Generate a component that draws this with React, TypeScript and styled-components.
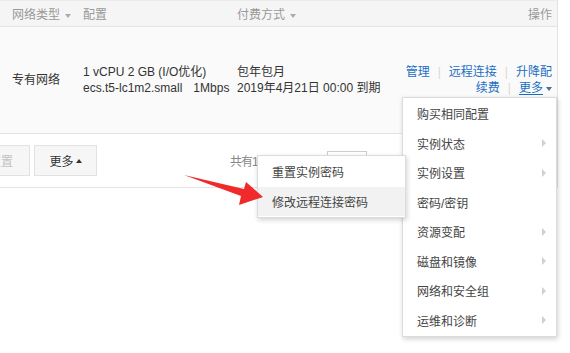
import React from 'react';
import styled, {createGlobalStyle} from 'styled-components';

const GlobalStyle = createGlobalStyle`
  html, body {
    margin: 0;
    padding: 0;
    background: #fff;
  }
  body {
    font-family: "Liberation Sans", "Noto Sans CJK SC", sans-serif;
    font-size: 12px;
    color: #333;
  }
`;

const Page = styled.div`
  position: relative;
  width: 570px;
  height: 353px;
  overflow: hidden;
  background: #fff;
`;

const Table = styled.div`
  width: 557px;
  border-right: 1px solid #e3e3e3;
`;

const HeaderRow = styled.div`
  display: flex;
  align-items: center;
  height: 25px;
  padding-left: 12px;
  padding-right: 5px;
  background: #f5f5f5;
  border-top: 1px solid #ececec;
  border-bottom: 1px solid #e4e4e4;
  color: #999;
`;

const Cell = styled.div<{w?: number; right?: boolean}>`
  ${(p) => (p.w ? `width: ${p.w}px;` : 'flex: 1;')}
  flex-shrink: 0;
  text-align: ${(p) => (p.right ? 'right' : 'left')};
  white-space: nowrap;
`;

const Caret = styled.span`
  display: inline-block;
  margin-left: 5px;
  vertical-align: middle;
  border-left: 3px solid transparent;
  border-right: 3px solid transparent;
  border-top: 4px solid #aaa;
`;

const DataRow = styled.div`
  display: flex;
  align-items: center;
  height: 106px;
  padding-left: 12px;
  padding-right: 5px;
  background: #fafafa;
  border-bottom: 1px solid #e4e4e4;
  line-height: 16px;
`;

const Gap = styled.span<{w: number}>`
  display: inline-block;
  width: ${(p) => p.w}px;
`;

const Link = styled.a<{underline?: boolean}>`
  color: #1a6fc4;
  text-decoration: ${(p) => (p.underline ? 'underline' : 'none')};
  text-underline-offset: 2px;
  cursor: pointer;
`;

const Sep = styled.span`
  color: #d8d8d8;
  margin: 0 8px;
`;

const BlueCaret = styled(Caret)`
  margin-left: 3px;
  border-top-color: #4a6f95;
`;

const Footer = styled.div`
  display: flex;
  align-items: center;
  height: 53px;
  border-bottom: 1px solid #e4e4e4;
`;

const Button = styled.div<{disabled?: boolean; offset?: number; w: number}>`
  display: flex;
  align-items: center;
  justify-content: center;
  box-sizing: border-box;
  width: ${(p) => p.w}px;
  height: 31px;
  margin-left: ${(p) => p.offset ?? 0}px;
  margin-right: 4px;
  background: #f6f6f6;
  border: 1px solid #e2e2e2;
  color: ${(p) => (p.disabled ? '#c2c2c2' : '#333')};
`;

const UpCaret = styled.span`
  display: inline-block;
  margin-left: 2px;
  border-left: 3px solid transparent;
  border-right: 3px solid transparent;
  border-bottom: 4px solid #333;
`;

const Pager = styled.div`
  display: flex;
  align-items: center;
  margin-left: 129px;
  color: #888;
  letter-spacing: -1px;
`;

const SizeBox = styled.div`
  box-sizing: border-box;
  width: 40px;
  height: 19px;
  margin: 0 4px 0 3px;
  padding-left: 6px;
  line-height: 17px;
  border: 1px solid #ccc;
  background: #fff;
  color: #555;
  letter-spacing: 0;
`;

const Menu = styled.div<{x: number; y: number; w: number}>`
  position: absolute;
  left: ${(p) => p.x}px;
  top: ${(p) => p.y}px;
  width: ${(p) => p.w}px;
  background: #fff;
  border: 1px solid #dcdcdc;
  box-shadow: 1px 2px 5px rgba(0, 0, 0, 0.18);
  padding: 1px 0;
  color: #444;
`;

const MenuItem = styled.div<{active?: boolean}>`
  display: flex;
  align-items: center;
  justify-content: space-between;
  height: 29.5px;
  padding: 0 10px 0 14px;
  background: ${(p) => (p.active ? '#f2f2f2' : 'transparent')};
  white-space: nowrap;
`;

const SubArrow = styled.span`
  display: inline-block;
  border-top: 4px solid transparent;
  border-bottom: 4px solid transparent;
  border-left: 4px solid #d0d0d0;
`;

const ArrowLayer = styled.svg`
  position: absolute;
  left: 0;
  top: 0;
  pointer-events: none;
`;

const moreItems = [
  {label: '购买相同配置', sub: false},
  {label: '实例状态', sub: true},
  {label: '实例设置', sub: true},
  {label: '密码/密钥', sub: false},
  {label: '资源变配', sub: true},
  {label: '磁盘和镜像', sub: true},
  {label: '网络和安全组', sub: true},
  {label: '运维和诊断', sub: true},
];

const App: React.FC = () => {
  return (
    <>
      <GlobalStyle />
      <Page>
        <Table>
          <HeaderRow>
            <Cell w={71}>
              网络类型
              <Caret />
            </Cell>
            <Cell w={154}>配置</Cell>
            <Cell>
              付费方式
              <Caret />
            </Cell>
            <Cell right>操作</Cell>
          </HeaderRow>

          <DataRow>
            <Cell w={71}>专有网络</Cell>
            <Cell w={154}>
              <div>1 vCPU 2 GB (I/O优化)</div>
              <div>
                ecs.t5-lc1m2.small
                <Gap w={11} />
                1Mbps
              </div>
            </Cell>
            <Cell>
              <div>包年包月</div>
              <div>2019年4月21日 00:00 到期</div>
            </Cell>
            <Cell right>
              <div>
                <Link>管理</Link>
                <Sep>|</Sep>
                <Link>远程连接</Link>
                <Sep>|</Sep>
                <Link>升降配</Link>
              </div>
              <div>
                <Link>续费</Link>
                <Sep>|</Sep>
                <Link underline>更多</Link>
                <BlueCaret />
              </div>
            </Cell>
          </DataRow>

          <Footer>
            <Button disabled w={58} offset={-28}>
              重置
            </Button>
            <Button w={63}>
              更多
              <UpCaret />
            </Button>
            <Pager>
              共有1条，每页显示
              <SizeBox>20</SizeBox>条
            </Pager>
          </Footer>
        </Table>

        <Menu x={402} y={97} w={153}>
          {moreItems.map((item) => (
            <MenuItem key={item.label}>
              {item.label}
              {item.sub && <SubArrow />}
            </MenuItem>
          ))}
        </Menu>

        <Menu x={257} y={155} w={147}>
          <MenuItem>重置实例密码</MenuItem>
          <MenuItem active>修改远程连接密码</MenuItem>
        </Menu>

        <ArrowLayer width="570" height="353" viewBox="0 0 570 353">
          <path
            d="M184 175 L244 189 L246 182 L263 197 L239 205 L241 196 Z"
            fill="#f0292b"
          />
        </ArrowLayer>
      </Page>
    </>
  );
};

export default App;
